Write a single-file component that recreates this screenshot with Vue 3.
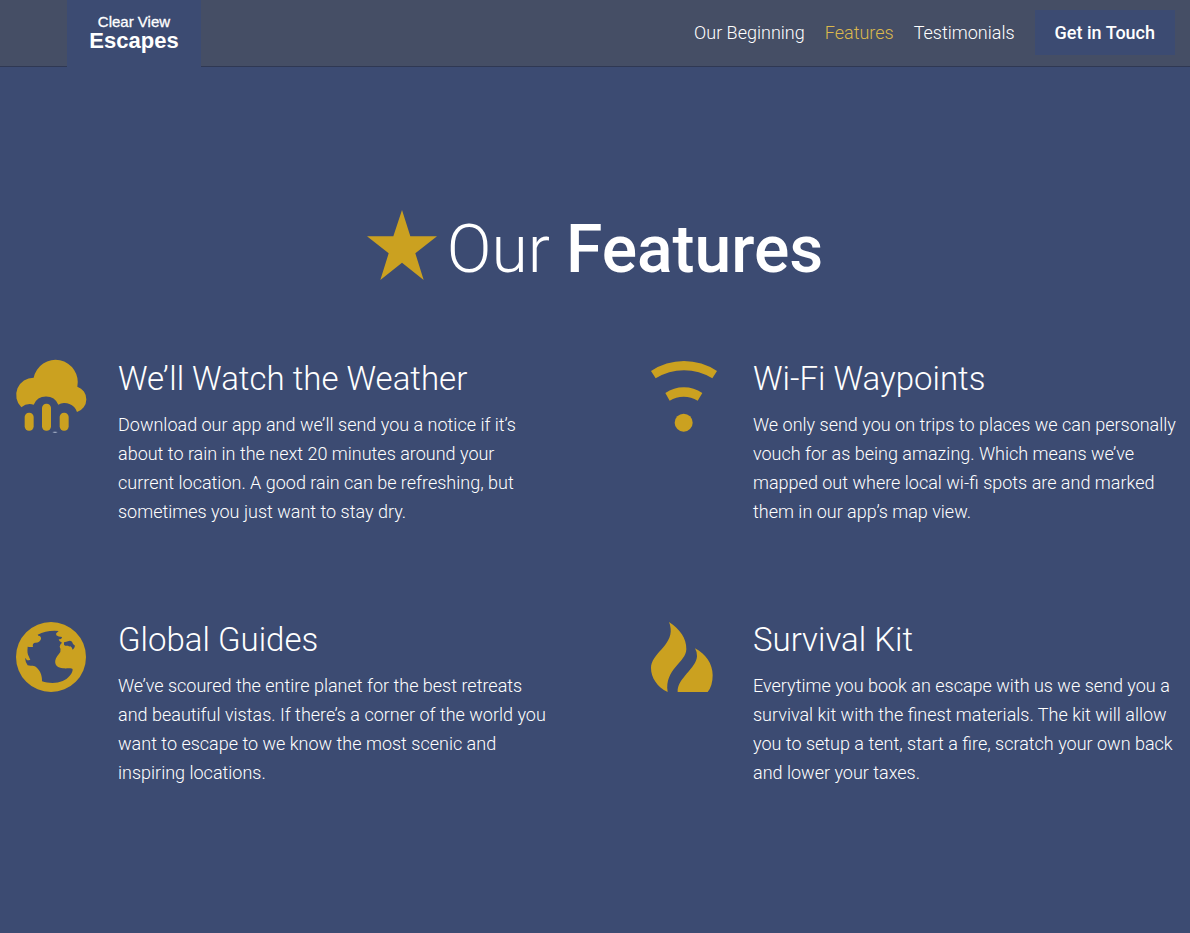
<script setup>
const links = [
  { label: 'Our Beginning', href: '#beginning' },
  { label: 'Features', href: '#features', active: true },
  { label: 'Testimonials', href: '#testimonials' },
]

const features = [
  {
    icon: 'rain',
    title: 'We’ll Watch the Weather',
    text: 'Download our app and we’ll send you a notice if it’s about to rain in the next 20 minutes around your current location. A good rain can be refreshing, but sometimes you just want to stay dry.',
  },
  {
    icon: 'wifi',
    title: 'Wi-Fi Waypoints',
    text: 'We only send you on trips to places we can personally vouch for as being amazing. Which means we’ve mapped out where local wi-fi spots are and marked them in our app’s map view.',
  },
  {
    icon: 'globe',
    title: 'Global Guides',
    text: 'We’ve scoured the entire planet for the best retreats and beautiful vistas. If there’s a corner of the world you want to escape to we know the most scenic and inspiring locations.',
  },
  {
    icon: 'fire',
    title: 'Survival Kit',
    text: 'Everytime you book an escape with us we send you a survival kit with the finest materials. The kit will allow you to setup a tent, start a fire, scratch your own back and lower your taxes.',
  },
]
</script>

<template>
  <div class="page">
    <header class="site-header">
      <a class="logo" href="#top">
        <span class="logo-top">Clear View</span>
        <span class="logo-main">Escapes</span>
      </a>
      <div class="header-right">
        <nav class="nav">
          <a
            v-for="link in links"
            :key="link.label"
            :href="link.href"
            :class="{ active: link.active }"
          >{{ link.label }}</a>
        </nav>
        <button class="cta" type="button">Get in Touch</button>
      </div>
    </header>

    <main id="features" class="features">
      <h2 class="title">
        <svg class="star" viewBox="53 60 210 210" aria-hidden="true">
          <path d="M158 60 183 139H263L198 190 223 270 158 218 93 270 118 190 53 139H132Z" />
        </svg>
        <span>Our <strong>Features</strong></span>
      </h2>

      <div class="grid">
        <article v-for="item in features" :key="item.title" class="feature">
          <svg v-if="item.icon === 'rain'" class="icon" viewBox="49 48 210 210" aria-hidden="true">
            <path d="M65 187A52 52 0 0 1 102 98A66 66 0 1 1 233 125A40 40 0 0 1 232 201A39 39 0 0 0 176 179A40 40 0 0 0 102 179A40 40 0 0 0 65 187Z" />
            <rect x="75" y="203" width="27" height="54" rx="13" />
            <rect x="127" y="176" width="27" height="81" rx="13" />
            <rect x="180" y="203" width="27" height="54" rx="13" />
            <path class="drop" d="M158 261Q166 265 174 261Q166 260 158 261Z" />
          </svg>
          <svg v-else-if="item.icon === 'wifi'" class="icon" viewBox="48 47 210 210" aria-hidden="true">
            <path d="M48 77A177 177 0 0 1 246 77L232 99A161 161 0 0 0 62 99Z" />
            <path d="M91 143A98 98 0 0 1 202 143L188 166A80 80 0 0 0 104 166Z" />
            <circle cx="146" cy="232" r="27" />
          </svg>
          <svg v-else-if="item.icon === 'globe'" class="icon" viewBox="48 42 210 210" aria-hidden="true">
            <path
              fill-rule="evenodd"
              d="M153 42A105 105 0 1 1 153 252A105 105 0 1 1 153 42Z
                 M113 80Q140 66 176 69L172 73Q166 76 169 82Q175 87 186 87Q186 94 176 94Q177 102 186 104Q180 109 179 116Q184 124 181 132C176 140 167 148 166 157C163 172 174 180 189 181C203 182 217 179 218 185C217 197 204 212 188 219C170 227 145 226 126 220C127 201 119 185 107 176C100 171 90 175 83 172Q76 162 75 149L80 155Q82 158 91 155C87 148 87 145 84 140C81 130 83 122 83 116Q89 118 99 117Q96 106 105 104Q119 105 123 93Q124 84 115 83Z
                 M192 103Q199 101 204 100Q210 96 216 101Q217 107 225 113Q224 120 218 125Q216 117 211 115Q207 116 204 113Q196 115 192 110Z"
            />
          </svg>
          <svg v-else class="icon" viewBox="48 42 210 210" aria-hidden="true">
            <path d="M102 42C135 64 155 91 154 124C153 164 88 183 98 252C66 237 48 208 48 180C48 137 112 113 107 62Q106 51 102 42Z" />
            <path d="M180 121C212 138 233 167 233 202Q233 234 218 252H128C126 211 184 182 186 145Q187 133 180 121Z" />
          </svg>
          <div class="copy">
            <h3>{{ item.title }}</h3>
            <p>{{ item.text }}</p>
          </div>
        </article>
      </div>
    </main>
  </div>
</template>

<style>
body {
  margin: 0;
  background: #3c4b72;
}
</style>

<style scoped>
.page {
  min-height: 100vh;
  background: #3c4b72;
  color: #fff;
  font-family: Roboto, "Liberation Sans", sans-serif;
  font-size: 18px;
  font-weight: 300;
}

.site-header {
  display: flex;
  justify-content: space-between;
  align-items: flex-start;
  height: 66px;
  padding: 0 15px 0 67px;
  background: #454e65;
  border-bottom: 1px solid #2f3853;
}

.logo {
  box-sizing: border-box;
  display: flex;
  flex-direction: column;
  align-items: center;
  width: 134px;
  height: 67px;
  padding-top: 13px;
  background: #3c4b72;
  color: #fff;
  font-family: "Liberation Sans", Arial, sans-serif;
  text-decoration: none;
}

.logo-top {
  font-size: 15px;
  font-weight: 400;
  line-height: 18px;
  -webkit-text-stroke: 0.3px #fff;
}

.logo-main {
  font-size: 22px;
  font-weight: 700;
  line-height: 20px;
}

.header-right {
  display: flex;
  align-items: center;
  gap: 20px;
  padding-top: 10px;
}

.nav {
  display: flex;
  gap: 20px;
}

.nav a {
  color: #fff;
  text-decoration: none;
}

.nav a.active {
  color: #dbb84d;
}

.cta {
  height: 45px;
  padding: 0 20px;
  border: 0;
  background: #3c4b72;
  color: #fff;
  font: inherit;
  font-weight: 500;
  cursor: pointer;
}

.features {
  padding: 143px 16px 96px;
}

.title {
  display: flex;
  justify-content: center;
  align-items: flex-start;
  gap: 10px;
  margin: 0 0 71px;
  font-size: 66px;
  font-weight: 300;
  line-height: 80px;
}

.title strong {
  font-weight: 500;
}

.star {
  width: 70px;
  height: 70px;
}

.star,
.icon {
  flex: none;
  overflow: visible;
  fill: #cba120;
}

.icon {
  width: 70px;
  height: 70px;
}

.drop {
  fill: #c5cfe0;
}

.grid {
  display: grid;
  grid-template-columns: 1fr 1fr;
  gap: 96px 104px;
  margin-right: -8px;
}

.feature {
  display: flex;
  gap: 32px;
}

.copy {
  flex: 1;
}

h3 {
  margin: 0 0 14px;
  font-size: 33px;
  font-weight: 300;
  line-height: 35px;
}

p {
  margin: 0;
  line-height: 29px;
}
</style>
